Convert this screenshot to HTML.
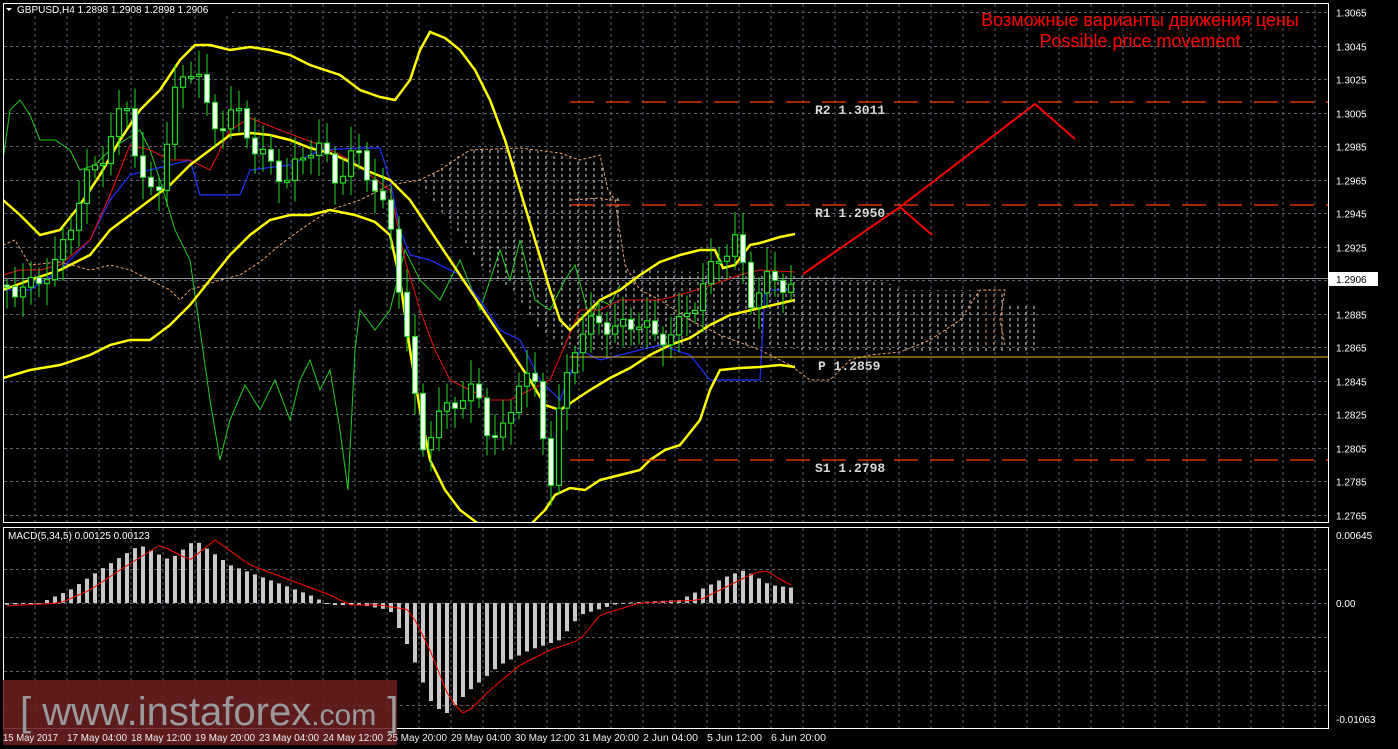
<!DOCTYPE html>
<html><head><meta charset="utf-8"><style>
html,body{margin:0;padding:0;background:#000;width:1398px;height:749px;overflow:hidden}
svg{display:block}
text{font-family:"Liberation Sans",sans-serif}
</style></head><body>
<svg id="s" width="1398" height="749" xmlns="http://www.w3.org/2000/svg">
<defs>
<pattern id="cl" width="8" height="6" patternUnits="userSpaceOnUse"><line x1="2" y1="0" x2="2" y2="3" stroke="#d8d8d8" stroke-width="1"/></pattern>
<pattern id="cl2" width="8" height="6" patternUnits="userSpaceOnUse"><line x1="2" y1="0" x2="2" y2="3" stroke="#e0a070" stroke-width="1"/></pattern>
<clipPath id="mc"><rect x="3" y="3" width="1325" height="519"/></clipPath>
<clipPath id="dc"><rect x="3" y="527" width="1325" height="201"/></clipPath>
</defs>
<g id="grid"></g>
<g clip-path="url(#mc)">
<polygon points="420,185 440,165 470,150 520,148 560,155 580,160 600,158 610,190 620,200 625,265 640,270 700,272 760,275 860,278 880,278 900,290 1000,290 1010,305 1040,305 1040,350 1000,352 920,352 900,350 800,350 760,345 700,345 640,345 600,350 580,350 560,345 540,330 520,300 500,280 480,265 460,235 440,210" fill="url(#cl)"/>
<polygon points="980,290 1000,290 1004,330 995,345 985,345 980,320" fill="url(#cl2)"/>
<polyline fill="none" stroke="#e8a070" stroke-width="1" stroke-dasharray="3,2" points="3,245 15,240 30,265 60,262 90,270 110,265 130,270 150,280 170,290 180,300 190,290 220,280 240,275 260,262 280,245 300,230 330,210 360,200 390,185 420,180 440,170 470,150 520,148 560,153 580,160 600,155 608,190 615,200 625,265 640,290 660,300 690,320 720,335 760,350 790,365 810,380 830,380 850,360 870,355 900,352 930,340 960,320 980,290 1005,290 1000,320 1005,345"/>
<polyline fill="none" stroke="#e8a070" stroke-width="1" stroke-dasharray="3,2" points="570,200 600,198 610,200 620,200"/>
<rect x="3" y="278" width="1325" height="1" fill="#8a96a0"/>
</g>
<g id="main" clip-path="url(#mc)"></g>
<g id="macd" clip-path="url(#dc)"></g>
<g id="ann"></g>
<rect x="3.5" y="3.5" width="1325" height="519" fill="none" stroke="#fff" stroke-width="1"/>
<rect x="3.5" y="527.5" width="1325" height="201" fill="none" stroke="#fff" stroke-width="1"/>
<g id="lab" font-size="10" fill="#fff"></g>
<rect x="4" y="4" width="225" height="12" fill="#000"/>
<polygon points="6,8 12,8 9,11" fill="#fff"/>
<text x="17" y="13" font-size="10" fill="#fff">GBPUSD,H4  1.2898 1.2908 1.2898 1.2906</text>
<text x="8" y="539" font-size="10" fill="#fff">MACD(5,34,5) 0.00125 0.00123</text>
<text x="1140" y="26" font-size="18" fill="#ff0000" text-anchor="middle">Возможные варианты движения цены</text>
<text x="1140" y="47" font-size="18" fill="#ff0000" text-anchor="middle">Possible price movement</text>
<g font-size="13" font-weight="bold" fill="#d8d8d8" style="font-family:'Liberation Mono',monospace">
<text x="815" y="114" style="font-family:'Liberation Mono',monospace">R2 1.3011</text>
<text x="815" y="217" style="font-family:'Liberation Mono',monospace">R1 1.2950</text>
<text x="818" y="370" style="font-family:'Liberation Mono',monospace">P 1.2859</text>
<text x="815" y="472" style="font-family:'Liberation Mono',monospace">S1 1.2798</text>
</g>
<polyline fill="none" stroke="#ff0000" stroke-width="2" points="803,274 900,207 932,235"/>
<polyline fill="none" stroke="#ff0000" stroke-width="2" points="900,207 1035,104 1075,139"/>
<rect x="3" y="680" width="394" height="65" fill="#6a1f1f" opacity="0.88"/>
<text x="20" y="725" font-size="40" fill="#9a9a9a">[ www.instaforex<tspan font-size="30">.com</tspan> ]</text>
<g id="tl"></g>
</svg>
<script>
var NS="http://www.w3.org/2000/svg";
function el(p,t,a){var e=document.createElementNS(NS,t);for(var k in a)e.setAttribute(k,a[k]);document.getElementById(p).appendChild(e);return e;}
function Y(p){return 12+(1.3065-p)*16767;}
for(var x=35;x<1328;x+=32){el("grid","line",{x1:x,y1:4,x2:x,y2:522,stroke:"#5a6470","stroke-dasharray":"3,3"});el("grid","line",{x1:x,y1:528,x2:x,y2:728,stroke:"#5a6470","stroke-dasharray":"3,3"});}
for(var i=0;i<16;i++){var p=1.3065-i*0.002;var y=Math.round(Y(p))+.5;el("grid","line",{x1:4,y1:y,x2:1328,y2:y,stroke:"#5a6470","stroke-dasharray":"3,3"});
 if(i!=8){var tt=el("lab","text",{x:1336,y:y+4});tt.textContent=p.toFixed(4);}}
[569.5,603.5,637.5,671.5,705.5].forEach(function(y){el("grid","line",{x1:4,y1:y,x2:1328,y2:y,stroke:"#5a6470","stroke-dasharray":"3,3"});});
el("lab","rect",{x:1329,y:272,width:49,height:14,fill:"#fff"});
var tt=el("lab","text",{x:1336,y:283,fill:"#000"});tt.textContent="1.2906";
[["0.00645",539],["0.00",607],["-0.01063",723]].forEach(function(a){var q=el("lab","text",{x:1336,y:a[1]});q.textContent=a[0];});
var tl=["15 May 2017","17 May 04:00","18 May 12:00","19 May 20:00","23 May 04:00","24 May 12:00","25 May 20:00","29 May 04:00","30 May 12:00","31 May 20:00","2 Jun 04:00","5 Jun 12:00","6 Jun 20:00"];
tl.forEach(function(s,i){var q=el("tl","text",{x:3+i*64,y:741,"font-size":"10",fill:"#f0f0f0",textLength:(s.length*5),lengthAdjust:"spacingAndGlyphs"});q.textContent=s;});
el("ann","line",{x1:570,y1:102,x2:1328,y2:102,stroke:"#ff4000","stroke-dasharray":"24,12","stroke-width":1.3});
el("ann","line",{x1:570,y1:205,x2:1328,y2:205,stroke:"#ff4000","stroke-dasharray":"24,12","stroke-width":1.3});
el("ann","line",{x1:570,y1:460,x2:1328,y2:460,stroke:"#ff4000","stroke-dasharray":"24,12","stroke-width":1.3});
el("ann","line",{x1:570,y1:357,x2:1328,y2:357,stroke:"#e8c020","stroke-width":1});
function pl(pts,c,w){el("main","polyline",{points:pts,fill:"none",stroke:c,"stroke-width":w});}
var K=[[3,285],[30,290],[60,265],[90,180],[110,150],[130,100],[145,180],[160,200],[180,90],[200,60],[215,130],[240,110],[260,150],[290,180],[320,140],[340,180],[360,150],[380,190],[395,230],[410,330],[425,450],[440,420],[460,400],[480,390],[495,440],[510,430],[525,370],[540,390],[555,480],[565,400],[580,340],[600,320],[620,330],[645,320],[660,340],[680,330],[700,300],[720,260],[740,240],[755,300],[770,280],[795,285]];
function py(x){for(var j=1;j<K.length;j++)if(x<=K[j][0]){var a=K[j-1],b=K[j];return a[1]+(b[1]-a[1])*(x-a[0])/(b[0]-a[0]);}return 285;}
pl("3,160 10,110 20,100 30,115 40,140 55,140 70,150 80,170 95,165 110,150 125,140 140,130 150,150 160,180 175,230 190,260 200,330 210,400 220,460 230,420 245,385 260,410 275,380 290,420 300,380 310,360 320,390 330,370 340,430 348,490 355,350 360,310 375,330 390,310 405,250 420,280 440,300 460,260 480,310 500,250 510,280 520,240 535,300 550,310 565,280 575,265 590,320 600,300 610,305 620,285","#22cc22",1);
pl("3,290 30,290 60,270 90,240 110,200 130,175 150,170 170,165 190,160 200,195 240,195 250,170 290,165 320,150 360,148 380,148 390,180 400,230 410,255 430,260 460,275 480,300 500,330 520,340 540,380 560,400 580,350 600,360 620,355 640,350 660,345 690,355 710,380 730,380 760,380 765,290 795,290","#2030ff",1.2);
pl("3,275 20,270 40,270 60,265 90,240 110,195 130,145 150,150 170,160 190,160 210,170 230,130 250,118 280,130 320,145 350,160 370,175 390,190 405,260 420,310 435,350 450,380 470,390 490,400 510,400 530,390 550,380 565,345 580,310 600,310 620,300 640,300 660,300 690,292 720,282 740,275 760,270 795,272","#e01010",1.1);
pl("3,200 20,215 40,235 60,230 80,205 100,175 120,140 140,110 160,90 180,60 195,45 210,45 230,50 250,47 270,50 290,55 310,65 340,75 360,90 380,97 395,100 410,80 420,50 430,32 445,38 460,50 475,70 490,100 505,140 520,190 535,240 550,290 560,320 570,330 585,315 600,300 620,290 640,275 660,262 680,255 700,250 715,250 723,268 735,265 750,245 760,243 780,237 795,234","#ffff00",2.5);
pl("3,290 30,280 60,270 90,255 110,230 130,215 150,200 170,185 190,165 210,150 230,135 250,133 270,135 290,140 310,148 330,153 350,162 370,172 390,180 410,200 430,230 450,260 470,290 490,320 510,350 530,380 545,405 560,410 575,400 590,390 610,378 630,368 650,355 670,345 690,338 710,325 730,315 760,308 795,300","#ffff00",2.5);
pl("3,378 30,370 60,365 90,355 110,345 130,340 150,340 170,325 190,305 210,280 230,255 250,235 270,220 290,215 310,215 330,210 355,215 375,222 390,235 400,280 410,350 420,410 430,460 445,490 460,510 480,525 530,525 545,510 555,495 570,488 585,490 600,480 620,475 640,470 650,460 665,450 680,445 700,420 710,390 720,370 740,368 760,367 780,365 795,367","#ffff00",2.5);
var prev=py(3);
for(var cx=7,n=0;cx<=795;cx+=8,n++){
 var c=py(cx+4)+Math.sin(n*1.7)*9;var o=prev;prev=c;
 var hi=Math.min(o,c)-6-Math.abs(Math.sin(n*2.3))*18, lo=Math.max(o,c)+6+Math.abs(Math.cos(n*1.3))*16;
 el("main","line",{x1:cx,y1:hi,x2:cx,y2:lo,stroke:"#22dd22","stroke-width":1});
 var bt=Math.min(o,c),bh=Math.max(2,Math.abs(c-o));
 if(c>o) el("main","rect",{x:cx-2.5,y:bt,width:5,height:bh,fill:"#fff",stroke:"#22dd22","stroke-width":1});
 else el("main","rect",{x:cx-2.5,y:bt,width:5,height:bh,fill:"#000",stroke:"#22dd22","stroke-width":1.2});
}
var MK=[[3,605],[40,603],[70,590],[100,570],[140,545],[170,560],[195,540],[230,565],[270,580],[310,595],[330,605],[360,605],[390,610],[410,650],[430,700],[445,715],[470,690],[500,665],[530,650],[560,640],[580,615],[620,603],[680,600],[710,585],[730,575],[745,570],[770,585],[795,588]];
function my(x){for(var j=1;j<MK.length;j++)if(x<=MK[j][0]){var a=MK[j-1],b=MK[j];return a[1]+(b[1]-a[1])*(x-a[0])/(b[0]-a[0]);}return 588;}
var sig=[];for(var mx=7;mx<=795;mx+=8){var v=my(mx);var t2=Math.min(603,v),h2=Math.abs(v-603);
 el("macd","rect",{x:mx-2,y:t2,width:4,height:Math.max(1,h2),fill:"#c8c8c8"});sig.push(mx+","+my(mx-20));}
el("macd","polyline",{points:sig.join(" "),fill:"none",stroke:"#ff0000","stroke-width":1});
</script>
</body></html>
